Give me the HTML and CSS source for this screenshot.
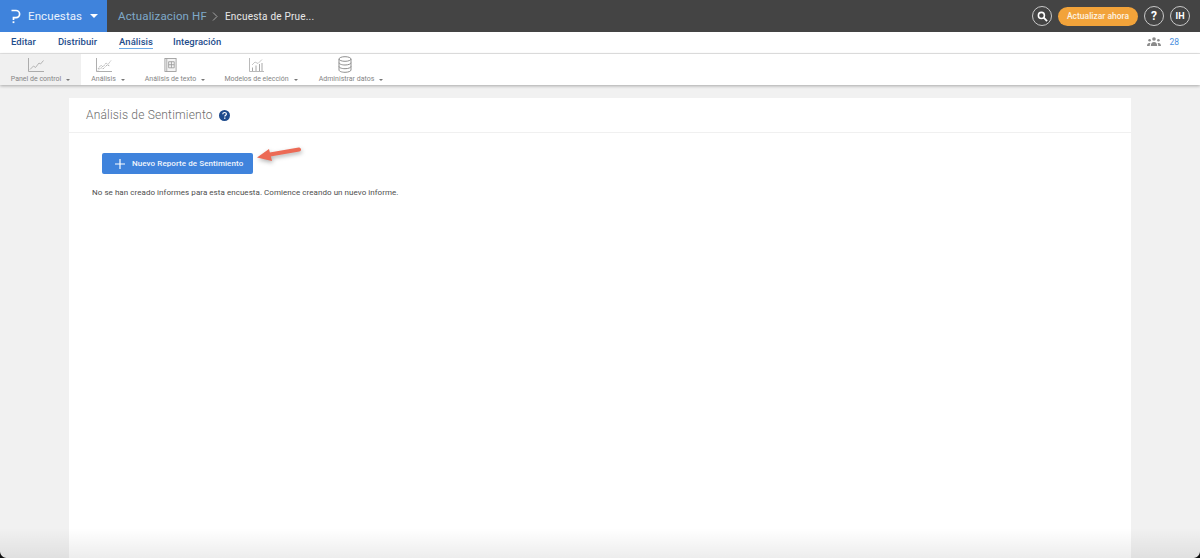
FILE: index.html
```
<!DOCTYPE html>
<html lang="es">
<head>
<meta charset="utf-8">
<title>Análisis de Sentimiento</title>
<link rel="stylesheet" href="styles.css">
</head>
<body>
<div class="app">
  <header class="topbar">
    <div class="brand">
      <svg class="logo" width="10" height="15" viewBox="0 0 10 15"><path d="M.5 1.500H5a3.600 3.600 0 0 1 0 7.200H2.500V11" fill="none" stroke="#fff" stroke-width="1.700"/><rect x="1.600" y="12.300" width="1.800" height="1.800" fill="#fff"/></svg>
      <span class="brand-name">Encuestas</span>
      <span class="caret-white"></span>
    </div>
    <div class="crumbs">
      <span class="crumb-parent">Actualizacion HF</span>
      <svg class="crumb-sep" width="6" height="9" viewBox="0 0 6 9"><path d="M1 .5l4 4-4 4" fill="none" stroke="#a5a5a5" stroke-width="1"/></svg>
      <span class="crumb-current">Encuesta de Prue...</span>
    </div>
    <div class="top-actions">
      <span class="round-btn"><svg width="11" height="11" viewBox="0 0 12 12"><circle cx="4.800" cy="4.800" r="3.300" fill="none" stroke="#fff" stroke-width="1.700"/><path d="M7.300 7.300L11 11" stroke="#fff" stroke-width="2"/></svg></span>
      <span class="upgrade">Actualizar ahora</span>
      <span class="round-btn round-text help">?</span>
      <span class="round-btn round-text">IH</span>
    </div>
  </header>

  <nav class="tabs">
    <a class="tab">Editar</a>
    <a class="tab">Distribuir</a>
    <a class="tab tab-active">Análisis</a>
    <a class="tab">Integración</a>
    <span class="users">
      <svg width="14" height="9" viewBox="0 0 14 9"><g fill="#8a8a8a"><circle cx="7" cy="2" r="1.800"/><path d="M3.800 9c0-2.600 1.300-4 3.200-4s3.200 1.400 3.200 4z"/><circle cx="2.600" cy="3.200" r="1.300"/><path d="M0 9c0-2 1-3 2.400-3 .5 0 .8.100 1 .3C2.900 7 2.700 8 2.700 9z"/><circle cx="11.400" cy="3.200" r="1.300"/><path d="M14 9c0-2-1-3-2.400-3-.5 0-.8.100-1 .3.500.7.700 1.700.7 2.700z"/></g></svg>
      <span class="users-count">28</span>
    </span>
  </nav>

  <div class="toolbar">
    <div class="tool tool-active tool-panel">
      <svg width="16" height="14" viewBox="0 0 16 14"><path d="M.5 0v13.500H16" fill="none" stroke="#9a9a9a" stroke-width=".8"/><path d="M2 11.500l3.500-3.500 2 1.500L11 5l1.500 1L15.500 2.500" fill="none" stroke="#a5a5a5" stroke-width=".8"/></svg>
      <span class="tool-label">Panel de control<i class="caret"></i></span>
    </div>
    <div class="tool tool-analisis">
      <svg width="16" height="14" viewBox="0 0 16 14"><path d="M.5 0v13.500H16" fill="none" stroke="#9a9a9a" stroke-width=".8"/><path d="M2 11l3-4 2 2 3-4 2 1.500 3-4M2 12.500l3-3 2 1.500 4-4 3 1" fill="none" stroke="#a5a5a5" stroke-width=".8" stroke-dasharray="1.500 .7"/></svg>
      <span class="tool-label">Análisis<i class="caret"></i></span>
    </div>
    <div class="tool tool-texto">
      <svg width="13" height="15" viewBox="0 0 13 15"><rect x=".5" y=".5" width="12" height="14" fill="#f4f4f4" stroke="#9a9a9a" stroke-width=".9"/><path d="M2.500 .5v14" stroke="#9a9a9a" stroke-width=".8"/><path d="M4.500 4h6v6.500h-6zM4.500 7.200h6M7.500 4v6.500" fill="none" stroke="#9a9a9a" stroke-width=".9"/></svg>
      <span class="tool-label">Análisis de texto<i class="caret"></i></span>
    </div>
    <div class="tool tool-modelos">
      <svg width="15" height="14" viewBox="0 0 15 14"><path d="M.5 0v13.500H15" fill="none" stroke="#a8a8a8" stroke-width=".8"/><path d="M3 7l3-3 3 1.500L13 1.500" fill="none" stroke="#b0b0b0" stroke-width=".7"/><path d="M3.500 13V9.500M7 13V7.500M10.500 13V6M13 13V5" stroke="#a8a8a8" stroke-width="1"/></svg>
      <span class="tool-label">Modelos de elección<i class="caret"></i></span>
    </div>
    <div class="tool tool-datos">
      <svg class="db" width="14" height="17" viewBox="0 0 14 17"><g fill="none" stroke="#8f8f8f" stroke-width="1"><ellipse cx="7" cy="3" rx="6" ry="2.300"/><path d="M1 3v11c0 1.300 2.700 2.300 6 2.300s6-1 6-2.300V3"/><path d="M1 6.700c0 1.300 2.700 2.300 6 2.300s6-1 6-2.300M1 10.400c0 1.300 2.700 2.300 6 2.300s6-1 6-2.300"/></g></svg>
      <span class="tool-label">Administrar datos<i class="caret"></i></span>
    </div>
  </div>

  <main class="content">
    <section class="card">
      <div class="card-head">
        <h1 class="card-title">Análisis de Sentimiento</h1>
        <svg class="info" width="11" height="11" viewBox="0 0 11 11"><circle cx="5.500" cy="5.500" r="5.500" fill="#1d4a8c"/><path d="M3.700 4.200c.1-1.100.9-1.700 1.900-1.700s1.800.6 1.800 1.500c0 1.300-1.600 1.300-1.600 2.500" fill="none" stroke="#fff" stroke-width="1.200"/><rect x="5.100" y="7.500" width="1.300" height="1.300" fill="#fff"/></svg>
      </div>
      <div class="card-body">
        <div class="action-row">
          <button class="primary" type="button">
            <svg width="10" height="10" viewBox="0 0 10 10"><path d="M5 0v10M0 5h10" stroke="#fff" stroke-width="1.200"/></svg>
            <span>Nuevo Reporte de Sentimiento</span>
          </button>
          <svg class="arrow" width="48" height="22" viewBox="0 0 48 22"><path d="M43 4.500L14 9.500" stroke="#ec6a55" stroke-width="4" stroke-linecap="round" fill="none"/><path d="M1 12.500L13 4l3 12z" fill="#ec6a55"/></svg>
        </div>
        <p class="empty">No se han creado informes para esta encuesta. Comience creando un nuevo informe.</p>
      </div>
    </section>
  </main>
  <div class="window-fade"></div>
</div>
</body>
</html>
```

FILE: styles.css
```
* { box-sizing: border-box; }
html, body { margin: 0; height: 100%; overflow: hidden; }
body { font-family: Roboto, "Noto Sans", sans-serif; background: #f1f1f1; }
.app { position: relative; width: 1200px; height: 558px; display: flex; flex-direction: column; overflow: hidden; }

.topbar { height: 32px; background: #444444; display: flex; align-items: center; flex: none; }
.brand { width: 107px; height: 32px; background: #3f83dc; display: flex; align-items: center; padding-left: 11px; color: #fff; }
.logo { flex: none; }
.brand-name { margin-left: 7px; font-size: 11.500px; color: #eaf2fc; letter-spacing: .1px; }
.caret-white { margin-left: 8px; border-left: 4px solid transparent; border-right: 4px solid transparent; border-top: 4px solid #fff; }
.crumbs { display: flex; align-items: center; margin-left: 11px; }
.crumb-parent { font-size: 11.500px; color: #7fa9c9; letter-spacing: .15px; }
.crumb-sep { margin: 0 7px 0 5px; }
.crumb-current { font-size: 10px; color: #e8e8e8; letter-spacing: .2px; }
.top-actions { margin-left: auto; display: flex; align-items: center; padding-right: 10px; }
.round-btn { width: 20px; height: 20px; border: 1px solid #c9c9c9; border-radius: 50%; display: flex; align-items: center; justify-content: center; }
.round-text { color: #fff; font-size: 9px; font-weight: 700; }
.help { font-size: 12px; margin-left: 6px; margin-right: 6px; }
.upgrade { margin-left: 6px; width: 80px; height: 19px; border-radius: 10px; background: #f2a33a; color: #fdf3e3; font-size: 8.500px; font-weight: 500; display: flex; align-items: center; justify-content: center; }

.tabs { height: 22px; background: #fff; border-bottom: 1px solid #e6e6e6; display: flex; align-items: center; padding: 0 0 2px 11px; flex: none; }
.tab { font-size: 9.500px; color: #1f4e8c; margin-right: 22px; font-weight: 500; line-height: 13px; letter-spacing: .03px; }
.tab-active { border-bottom: 1px solid #6aa9e6; margin-right: 20px; }
.users { margin-left: auto; margin-right: 21px; display: flex; align-items: center; gap: 8px; }
.users-count { font-size: 8.500px; color: #4a8fe0; }

.toolbar { height: 31px; background: #fff; display: flex; flex: none; box-shadow: 0 1px 3px rgba(0,0,0,.3); position: relative; }
.tool { height: 31px; display: flex; flex-direction: column; align-items: center; padding-top: 4px; }
.tool svg { flex: none; height: 14px; margin-right: 9px; }
.tool svg.db { height: 17px; margin-right: 12px; }
.tool-label { font-size: 7px; color: #858585; white-space: nowrap; margin-top: 2px; line-height: 10px; }
.tool-datos { padding-top: 2px; }
.tool-datos .tool-label { margin-top: 1px; }
.tool-active { background: #f0f0f0; }
.tool-panel { width: 81px; }
.tool-analisis { width: 54px; }
.tool-texto { width: 80px; }
.tool-modelos { width: 92px; }
.tool-datos { width: 88px; }
.caret { display: inline-block; margin-left: 5px; vertical-align: 0; border-left: 2.500px solid transparent; border-right: 2.500px solid transparent; border-top: 2.500px solid #777; }

.content { flex: 1; padding: 13px 69px 0; min-height: 0; }
.card { background: #fff; height: 100%; }
.card-head { height: 35px; border-bottom: 1px solid #f0f0f0; display: flex; align-items: center; padding-left: 17px; }
.card-title { margin: 0; font-size: 12px; font-weight: 300; color: #6c6c6c; letter-spacing: .18px; }
.info { margin-left: 6px; }
.card-body { padding: 20px 0 0 23px; }
.action-row { display: flex; align-items: flex-start; margin-left: 10px; height: 22px; }
.primary { width: 151px; height: 21px; border: 0; border-radius: 2px; background: #3f83dc; color: #f1f6fd; display: flex; align-items: center; padding: 0 0 0 13px; font-family: inherit; font-size: 8px; font-weight: 500; letter-spacing: .08px; }
.primary span { margin-left: 7px; white-space: nowrap; }
.arrow { margin: -8px 0 0 3px; filter: drop-shadow(1px 2px 2px rgba(0,0,0,.3)); }
.empty { margin: 13px 0 0 0; font-size: 8px; color: #4d4d4d; letter-spacing: .05px; }

.window-fade { position: absolute; left: 0; right: 0; bottom: 0; height: 30px; pointer-events: none; background: linear-gradient(to bottom, rgba(0,0,0,0), rgba(0,0,0,.07)); }
.window-fade::before, .window-fade::after { content: ""; position: absolute; bottom: 0; width: 7px; height: 7px; }
.window-fade::before { left: 0; background: radial-gradient(circle at 100% 0, transparent 6.500px, #111 7.500px); }
.window-fade::after { right: 0; background: radial-gradient(circle at 0 0, transparent 6.500px, #111 7.500px); }
```
